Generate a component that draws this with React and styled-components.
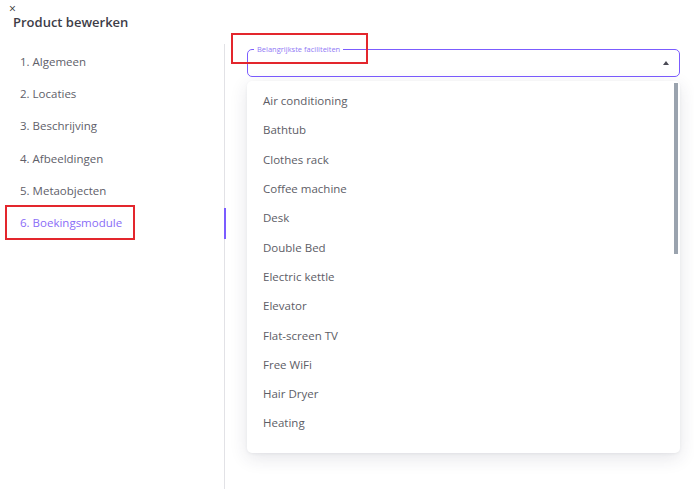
import React from "react";
import styled, { createGlobalStyle } from "styled-components";

const steps = [
  "1. Algemeen",
  "2. Locaties",
  "3. Beschrijving",
  "4. Afbeeldingen",
  "5. Metaobjecten",
  "6. Boekingsmodule",
];

const facilities = [
  "Air conditioning",
  "Bathtub",
  "Clothes rack",
  "Coffee machine",
  "Desk",
  "Double Bed",
  "Electric kettle",
  "Elevator",
  "Flat-screen TV",
  "Free WiFi",
  "Hair Dryer",
  "Heating",
  "Iron",
  "Kitchen",
  "Kitchenette",
  "Microwave",
  "Minibar",
  "Non-smoking rooms",
  "Parking",
  "Private bathroom",
  "Refrigerator",
  "Safe",
  "Shower",
  "Single Bed",
  "Sofa",
  "Terrace",
  "Towels",
];

function App() {
  const active = 5;

  return (
    <>
      <GlobalStyle />
      <Page>
        <Header>
          <CloseBtn>×</CloseBtn>
          <Title>Product bewerken</Title>
        </Header>
        <Body>
          <Nav>
            {steps.map((step, i) => (
              <NavItem key={step} $active={i === active}>
                {step}
              </NavItem>
            ))}
          </Nav>
          <Content>
            <SelectField>
              <Outline>
                <Legend>Belangrijkste faciliteiten</Legend>
              </Outline>
              <Arrow />
            </SelectField>
            <Menu>
              <MenuList>
                {facilities.map((f) => (
                  <Option key={f}>{f}</Option>
                ))}
              </MenuList>
              <ScrollThumb />
            </Menu>
          </Content>
        </Body>
        <Mark style={{ left: 5, top: 205, width: 130, height: 35 }} />
        <Mark style={{ left: 231, top: 33, width: 137, height: 31 }} />
      </Page>
    </>
  );
}

export default App;

const GlobalStyle = createGlobalStyle`
  html, body {
    margin: 0;
    padding: 0;
    background: #fff;
  }
  body {
    font-family: "Open Sans", "Noto Sans", sans-serif;
    color: #4a4a55;
  }
`;

const Page = styled.div`
  position: relative;
  width: 694px;
  height: 489px;
  overflow: hidden;
  display: flex;
  flex-direction: column;
`;

const Header = styled.div`
  padding: 3px 0 0 9px;
  height: 44px;
  box-sizing: border-box;
`;

const CloseBtn = styled.div`
  font-size: 12px;
  line-height: 11px;
  color: #333;
`;

const Title = styled.h1`
  margin: 0 0 0 4px;
  font-size: 13px;
  line-height: 16px;
  font-weight: 600;
  color: #3d3d48;
`;

const Body = styled.div`
  flex: 1;
  display: flex;
`;

const Nav = styled.div`
  width: 225px;
  border-right: 1px solid #e2e2e6;
  padding-top: 1px;
  box-sizing: border-box;
  flex-shrink: 0;
`;

const NavItem = styled.div`
  position: relative;
  height: 32.3px;
  display: flex;
  align-items: center;
  padding-left: 20px;
  font-size: 11.5px;
  color: ${(p) => (p.$active ? "#8a6cf7" : "#606069")};

  &::after {
    content: "";
    display: ${(p) => (p.$active ? "block" : "none")};
    position: absolute;
    right: -2px;
    top: 2px;
    width: 2px;
    height: 31px;
    background: #7b5cff;
  }
`;

const Content = styled.div`
  flex: 1;
  padding: 6px 14px 0 22px;
  display: flex;
  flex-direction: column;
`;

const SelectField = styled.div`
  position: relative;
  height: 27px;
`;

const Outline = styled.fieldset`
  position: absolute;
  inset: -6px 0 0 0;
  margin: 0;
  padding: 0 6px;
  border: 1px solid #7b5cff;
  border-radius: 5px;
`;

const Legend = styled.legend`
  padding: 0 3px;
  font-size: 7.5px;
  line-height: 10px;
  color: #9179f5;
`;

const Arrow = styled.span`
  position: absolute;
  right: 11px;
  top: 11px;
  width: 0;
  height: 0;
  border-left: 3.5px solid transparent;
  border-right: 3.5px solid transparent;
  border-bottom: 4px solid #4a4a55;
`;

const Menu = styled.div`
  position: relative;
  margin-top: 4px;
  height: 372px;
  padding-bottom: 6px;
  box-sizing: border-box;
  background: #fff;
  border-radius: 5px;
  box-shadow: 0 5px 18px rgba(40, 45, 70, 0.12), 0 1px 3px rgba(40, 45, 70, 0.06);
  overflow: hidden;
`;

const MenuList = styled.div`
  height: 100%;
  padding-top: 5px;
  box-sizing: border-box;
  overflow: hidden;
`;

const ScrollThumb = styled.div`
  position: absolute;
  right: 2px;
  top: 2px;
  width: 4px;
  height: 171px;
  background: #9aa3ae;
`;

const Option = styled.div`
  height: 29.3px;
  display: flex;
  align-items: center;
  padding-left: 16px;
  font-size: 11.5px;
  color: #5d5d66;
`;

const Mark = styled.div`
  position: absolute;
  border: 2px solid #e3262d;
  box-sizing: border-box;
  pointer-events: none;
`;
